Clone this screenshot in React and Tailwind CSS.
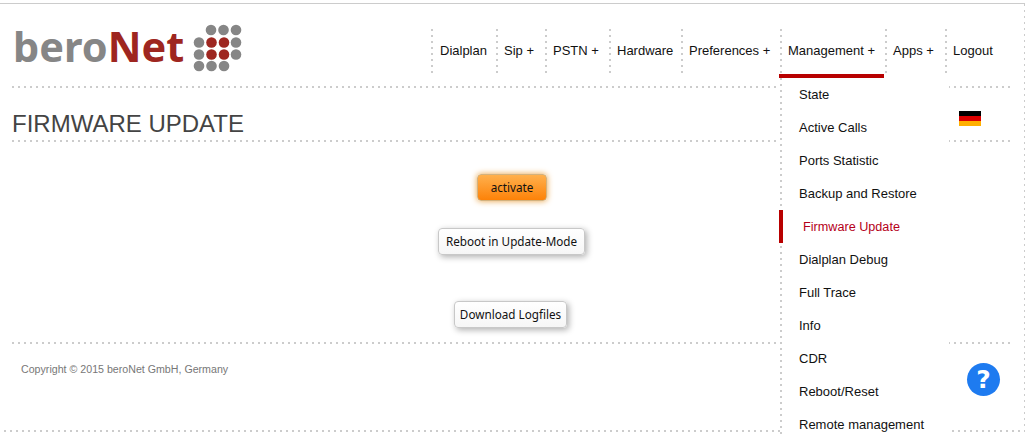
import React from 'react';

const navItems = [
  { label: 'Dialplan', width: 'w-[65px]', pad: 'pl-[7px]' },
  { label: 'Sip +', width: 'w-[49px]', pad: 'pl-[6px]' },
  { label: 'PSTN +', width: 'w-[64px]', pad: 'pl-[6px]' },
  { label: 'Hardware', width: 'w-[72px]', pad: 'pl-[6px]' },
  { label: 'Preferences +', width: 'w-[99px]', pad: 'pl-[6px]' },
  { label: 'Management +', width: 'w-[105px]', pad: 'pl-[6px]', active: true },
  { label: 'Apps +', width: 'w-[60px]', pad: 'pl-[6px]' },
  { label: 'Logout', width: 'w-[57px]', pad: 'pl-[6px]' },
];

const menuItems = [
  'State',
  'Active Calls',
  'Ports Statistic',
  'Backup and Restore',
  'Firmware Update',
  'Dialplan Debug',
  'Full Trace',
  'Info',
  'CDR',
  'Reboot/Reset',
  'Remote management',
];

// logo dots: [cx, cy, red]
const logoDots = [
  [18, 6, 0], [30.5, 6, 0], [43, 6, 0],
  [6, 18.5, 0], [18.5, 18.5, 1], [31, 18.5, 1], [43, 18.5, 0],
  [6, 30.5, 0], [18.5, 30.5, 1], [31, 30.5, 1], [43, 30.5, 0],
  [6, 42, 0], [18.5, 42, 0], [31, 42, 0],
];

const Rule = ({ className }) => (
  <div className={`h-[2px] bg-[linear-gradient(to_right,#cccccc_2px,transparent_2px)] bg-[length:6px_2px] ${className}`}></div>
);

const App = () => {
  return (
    <div className="relative w-[1025px] h-[435px] overflow-hidden bg-white font-['Liberation_Sans',Arial,sans-serif] pt-[3px]">
      <div className="h-[1px] bg-[#cccccc]"></div>

      <header className="flex h-[82px]">
        <div className="w-[431px] shrink-0 flex pl-[13px] pt-[20px] items-start">
          <div className="w-[180px] h-[44px] text-[41.5px] leading-[44px] font-bold font-['Noto_Sans',sans-serif] whitespace-nowrap">
            <span className="text-[#868686]">bero</span>
            <span className="text-[#9e2620]">Net</span>
          </div>
          <svg width="50" height="50" viewBox="0 0 50 50">
            {logoDots.map(([cx, cy, red]) => (
              <circle key={`${cx}-${cy}`} cx={cx} cy={cy} r="5.3" fill={red ? '#9e2620' : '#868686'} />
            ))}
          </svg>
        </div>
        <nav className="flex pt-[25px] items-start">
          {navItems.map((item) => (
            <div key={item.label} className={`relative flex h-[45px] ${item.width}`}>
              <div className="w-[2px] h-[45px] bg-[linear-gradient(to_bottom,#cccccc_2px,transparent_2px)] bg-[length:2px_6px]"></div>
              <span className={`${item.pad} text-[13px] leading-[43px] text-[#111111] whitespace-nowrap`}>{item.label}</span>
              {item.active && <div className="absolute -left-[1px] top-[45px] w-[105px] h-[4px] bg-[#b80000]"></div>}
            </div>
          ))}
        </nav>
      </header>

      <Rule className="ml-3 w-[998px]" />

      <div className="flex justify-between items-start h-[52px] ml-3 w-[998px]">
        <h1 className="pt-[22px] text-[24px] leading-[28px] text-[#444444]">FIRMWARE UPDATE</h1>
        <div className="mt-[23px] mr-[29px] w-[22px] h-[15px] flex flex-col">
          <div className="h-[5px] bg-black"></div>
          <div className="h-[5px] bg-[#dd0000]"></div>
          <div className="h-[5px] bg-[#ffb000]"></div>
        </div>
      </div>

      <Rule className="ml-3 w-[998px]" />

      <main className="w-[1024px] h-[200px] flex flex-col items-center font-['Noto_Sans',Tahoma,sans-serif] text-[11.7px] text-[#111111]">
        <button className="mt-[32px] pt-[1px] w-[70px] h-[27px] rounded-[4px] border border-[#d2b27f] bg-[linear-gradient(to_bottom,#ffb04d,#fd8208)] shadow-[0_0_6px_#e8a040]">activate</button>
        <button className="mt-[27px] pt-[1px] -ml-[1px] w-[147px] h-[27px] rounded-[4px] border border-[#c8c8c8] bg-[linear-gradient(to_bottom,#ffffff,#f6f6f6)] shadow-[2px_2px_6px_#b0b0b0]">Reboot in Update-Mode</button>
        <button className="mt-[46px] -ml-[3px] w-[113px] h-[27px] rounded-[4px] border border-[#c8c8c8] bg-[linear-gradient(to_bottom,#ffffff,#f6f6f6)] shadow-[2px_2px_6px_#b0b0b0]">Download Logfiles</button>
      </main>

      <Rule className="ml-3 w-[998px]" />

      <footer className="flex justify-between items-start h-[86px] ml-3 w-[998px]">
        <p className="pl-[9px] pt-[18px] text-[10.65px] leading-[14px] text-[#777777]">Copyright © 2015 beroNet GmbH, Germany</p>
        <div className="mt-[19px] mr-[10px] w-[33px] h-[33px] rounded-full bg-[#1e7bf0] flex items-center justify-center text-white font-bold text-[25px] leading-none font-['DejaVu_Sans',sans-serif]">?</div>
      </footer>

      <Rule className="ml-1 w-[1021px]" />

      {/* vertical dots on the right edge of the page */}
      <div className="absolute right-0 top-[4px] w-[1px] h-[431px] bg-[linear-gradient(to_bottom,#cccccc_2px,transparent_2px)] bg-[length:1px_6px]"></div>

      {/* open Management dropdown */}
      <div className="absolute left-[780px] top-[78px] w-[169px] h-[357px] bg-white">
        <div className="absolute left-0 top-0 w-[2px] h-full bg-[linear-gradient(to_bottom,#cccccc_2px,transparent_2px)] bg-[length:2px_6px]"></div>
        <ul>
          {menuItems.map((item) =>
            item === 'Firmware Update' ? (
              <li key={item} className="relative h-[33px] pl-[23px] text-[12.65px] leading-[34px] text-[#b5001a] whitespace-nowrap">
                <div className="absolute -left-[1px] top-0 w-[4px] h-[33px] bg-[#b80000]"></div>
                {item}
              </li>
            ) : (
              <li key={item} className="h-[33px] pl-[19px] text-[13px] leading-[34px] text-[#111111] whitespace-nowrap">{item}</li>
            )
          )}
        </ul>
      </div>
    </div>
  );
};

export default App;
